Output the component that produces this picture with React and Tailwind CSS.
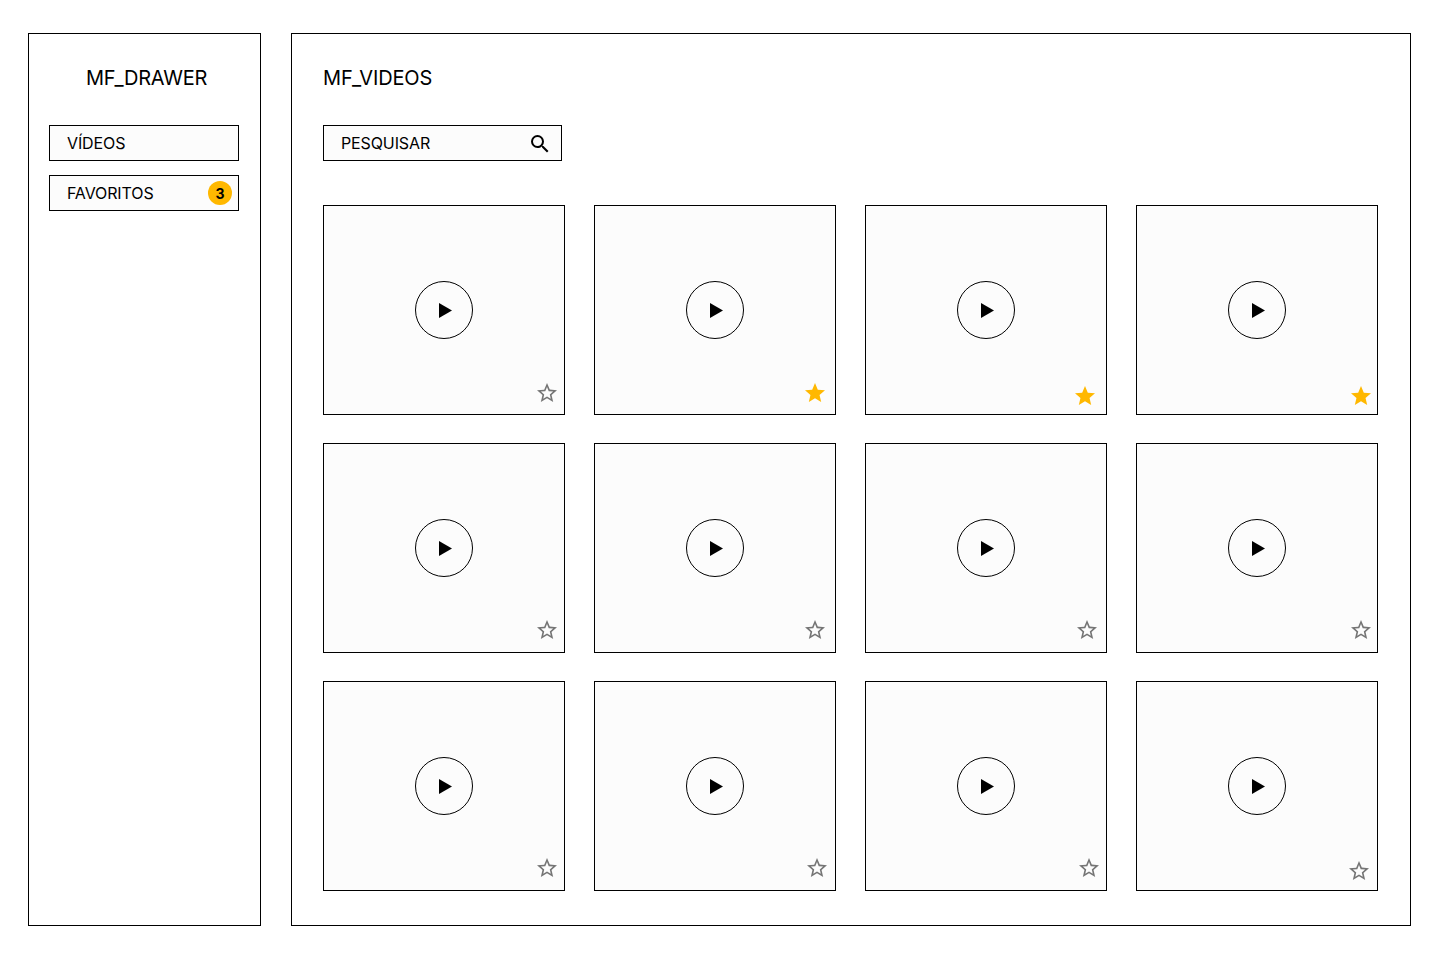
import React from "react";
import { MdSearch, MdStar, MdStarBorder } from "react-icons/md";

const cards = [
  { fav: false, pos: "right-[5px] bottom-[9px]" },
  { fav: true, pos: "right-[8px] bottom-[9px]" },
  { fav: true, pos: "right-[9px] bottom-[6px]" },
  { fav: true, pos: "right-[4px] bottom-[6px]" },
  { fav: false, pos: "right-[5px] bottom-[10px]" },
  { fav: false, pos: "right-[8px] bottom-[10px]" },
  { fav: false, pos: "right-[7px] bottom-[10px]" },
  { fav: false, pos: "right-[4px] bottom-[10px]" },
  { fav: false, pos: "right-[5px] bottom-[10px]" },
  { fav: false, pos: "right-[6px] bottom-[10px]" },
  { fav: false, pos: "right-[5px] bottom-[10px]" },
  { fav: false, pos: "right-[6px] bottom-[7px]" },
];

function Card({ fav, pos }) {
  const Star = fav ? MdStar : MdStarBorder;
  return (
    <div className="relative flex h-[210px] items-center justify-center border border-black bg-[#fcfcfc]">
      <div className="flex h-[58px] w-[58px] items-center justify-center rounded-full border border-black">
        <svg width="14" height="16" viewBox="0 0 14 16" className="mt-[1px] ml-[3px]">
          <path d="M0 0 L13 7.5 L0 15 Z" fill="#000" />
        </svg>
      </div>
      <Star size={24} className={`absolute ${pos} ${fav ? "text-[#ffb800]" : "text-[#757575]"}`} />
    </div>
  );
}

export default function App() {
  return (
    <div className="flex gap-[30px] bg-white pt-[33px] pb-[33px] pl-[28px] font-['Inter',sans-serif] text-black antialiased">
      <aside className="h-[893px] w-[233px] border border-black pt-[32px] pl-[20px]">
        <h2 className="mb-[35px] h-[24px] w-[190px] pl-[5px] text-center text-[20px] leading-[24px] font-normal tracking-[-0.28px]">MF_DRAWER</h2>
        <div className="flex w-[190px] flex-col gap-[14px]">
          <div className="flex h-[36px] items-center border border-black bg-[#fcfcfc] pl-[17px] text-[16px] tracking-[-0.12px]">VÍDEOS</div>
          <div className="flex h-[36px] items-center justify-between border border-black bg-[#fcfcfc] pr-[6px] pl-[17px] text-[16px] tracking-[-0.12px]">
            <span>FAVORITOS</span>
            <span className="flex h-[24px] w-[24px] items-center justify-center rounded-full bg-[#ffb800] text-[14px] font-bold">3</span>
          </div>
        </div>
      </aside>
      <main className="h-[893px] w-[1120px] border border-black pt-[32px] pl-[31px]">
        <h1 className="mb-[35px] h-[24px] text-[20px] leading-[24px] font-normal tracking-[-0.15px]">MF_VIDEOS</h1>
        <div className="mb-[44px] flex h-[36px] w-[239px] items-center justify-between border border-black bg-[#fcfcfc] pr-[9px] pl-[17px] text-[16px] tracking-[-0.12px]">
          <span>PESQUISAR</span>
          <MdSearch size={24} className="mt-[1px]" />
        </div>
        <div className="grid grid-cols-[repeat(4,242px)] gap-x-[29px] gap-y-[28px]">
          {cards.map((c, i) => (
            <Card key={i} fav={c.fav} pos={c.pos} />
          ))}
        </div>
      </main>
    </div>
  );
}
